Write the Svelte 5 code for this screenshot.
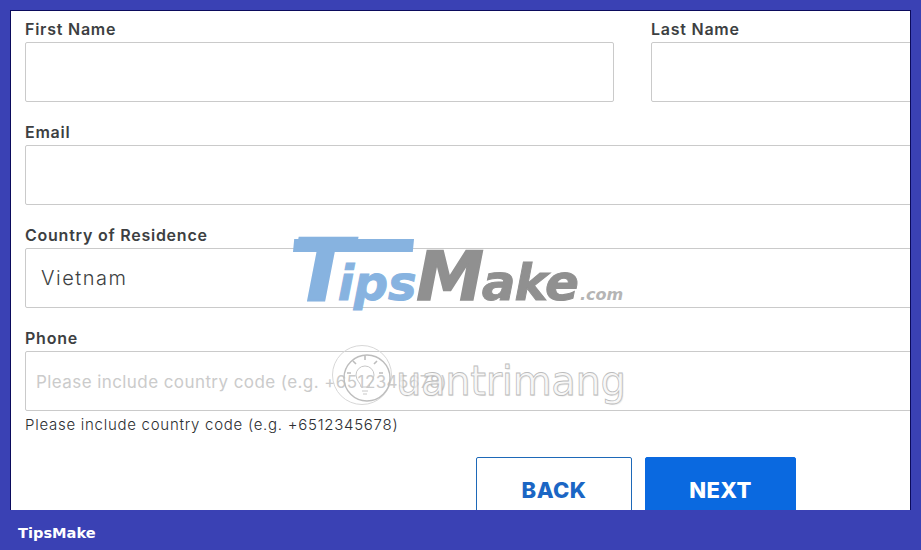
<script lang="ts">
    const fields = { first: '', last: '', email: '', country: 'Vietnam', phone: '' };
    const hint = 'Please include country code (e.g. +6512345678)';
</script>

<div class="page">
    <main class="panel">
        <form class="form">
            <div class="row">
                <label class="field">
                    <span class="label">First Name</span>
                    <input type="text" value={fields.first} />
                </label>
                <label class="field">
                    <span class="label">Last Name</span>
                    <input type="text" value={fields.last} />
                </label>
            </div>
            <label class="field">
                <span class="label">Email</span>
                <input type="email" value={fields.email} />
            </label>
            <label class="field">
                <span class="label">Country of Residence</span>
                <input class="country" type="text" value={fields.country} />
            </label>
            <label class="field phone">
                <span class="label">Phone</span>
                <input type="tel" placeholder={hint} value={fields.phone} />
                <span class="hint">{hint}</span>
            </label>
            <div class="actions">
                <button type="button" class="btn back">BACK</button>
                <button type="button" class="btn next">NEXT</button>
            </div>
        </form>
    </main>
    <footer class="footer">TipsMake</footer>

    <div class="logo" aria-hidden="true">
        <span class="bar"></span>
        <span class="t">T</span><span class="ips">ips</span><span class="m">M</span><span class="ake">ake</span><span class="com">.com</span>
    </div>

    <div class="qtm" aria-hidden="true">
        <svg width="64" height="66" viewBox="0 0 64 66" fill="none" stroke="#d8d8d8">
            <circle cx="30" cy="33" r="29.5" />
            <circle cx="35" cy="36" r="23" stroke="#bdbdbd" stroke-width="1.4" />
            <path d="M29 45c0-4-5-6-5-12a9 9 0 0 1 18 0c0 6-5 8-5 12z" stroke="#c8c8c8" />
            <path d="M30 49h6M31 52h4" stroke="#c8c8c8" />
            <path d="M33 14v4M21 19l3 3M45 19l-3 3M15 31h4M47 31h4" stroke="#bdbdbd" stroke-width="1.6" />
        </svg>
        <span class="qtm-text">uantrimang</span>
    </div>
</div>

<style>
    :global(body) {
        margin: 0;
        font-family: Inter, "Liberation Sans", sans-serif;
    }

    .page {
        position: relative;
        width: 921px;
        height: 550px;
        box-sizing: border-box;
        padding: 10px 10px 0;
        display: flex;
        flex-direction: column;
        background: #3a41b4;
        overflow: hidden;
    }

    .panel {
        flex: 1;
        min-height: 0;
        background: #fff;
        border: 1px solid #0b0b5c;
        border-bottom: 0;
        overflow: hidden;
    }

    .form {
        width: 1000px;
        padding: 9px 0 0 14px;
        display: flex;
        flex-direction: column;
        gap: 21px;
    }

    .row {
        display: grid;
        grid-template-columns: 589px 1fr;
        gap: 37px;
    }

    .field {
        display: flex;
        flex-direction: column;
        gap: 3px;
    }

    .label {
        font-size: 16px;
        line-height: 19px;
        font-weight: 600;
        letter-spacing: 0.76px;
        color: #3d3f42;
    }

    input {
        box-sizing: border-box;
        width: 100%;
        height: 60px;
        margin: 0;
        padding: 2px 10px 0;
        border: 1px solid #cacaca;
        border-radius: 2px;
        background: transparent;
        font: inherit;
        font-size: 17px;
        letter-spacing: 0.42px;
        color: #3d3f42;
        outline: none;
    }

    input::placeholder {
        color: #cbcbcb;
        opacity: 1;
    }

    .country {
        padding: 0 15px;
        font-size: 20px;
        font-weight: 300;
        letter-spacing: 1.5px;
    }

    .hint {
        margin-top: 1px;
        font-size: 15px;
        font-weight: 300;
        line-height: 20px;
        letter-spacing: 0.73px;
        color: #2c2e31;
    }

    .actions {
        display: flex;
        gap: 13px;
        margin-top: 1px;
        padding-left: 451px;
    }

    .btn {
        height: 66px;
        box-sizing: border-box;
        border-radius: 2px;
        font: inherit;
        font-size: 22px;
        font-weight: 800;
        letter-spacing: 0.4px;
    }

    .back {
        width: 156px;
        background: #fff;
        border: 1px solid #1e69b8;
        color: #1b66c4;
    }

    .next {
        width: 151px;
        background: #0a69e0;
        border: 1px solid #0a69e0;
        color: #fff;
    }

    .footer {
        flex: 0 0 40px;
        margin: 0 -10px;
        padding: 4px 0 0 18px;
        box-sizing: border-box;
        display: flex;
        align-items: center;
        background: #3a41b4;
        color: #fff;
        font-family: "DejaVu Sans", sans-serif;
        font-size: 14.6px;
        font-weight: 700;
    }

    /* watermarks over the form */
    .logo {
        position: absolute;
        left: 293px;
        top: 225px;
        display: flex;
        align-items: baseline;
        height: 90px;
        font-family: "DejaVu Sans", sans-serif;
        font-style: italic;
        font-weight: 700;
        line-height: 90px;
        white-space: nowrap;
        pointer-events: none;
    }

    .bar {
        position: absolute;
        left: 0;
        top: 14px;
        width: 121px;
        height: 13px;
        background: #87b3e0;
        clip-path: polygon(1% 0, 100% 0, 99% 100%, 0 100%);
    }

    .t {
        font-size: 86px;
        color: #87b3e0;
        margin-right: -14px;
        -webkit-text-stroke: 2px #87b3e0;
    }

    .ips {
        font-size: 48px;
        color: #87b3e0;
        letter-spacing: -0.3px;
        -webkit-text-stroke: 1px #87b3e0;
    }

    .m {
        font-size: 68px;
        color: #909090;
        letter-spacing: -2px;
        -webkit-text-stroke: 1.5px #909090;
    }

    .ake {
        font-size: 50px;
        color: #909090;
        letter-spacing: -1px;
        -webkit-text-stroke: 1px #909090;
    }

    .com {
        font-size: 16px;
        color: #b5b5b5;
        margin-left: 2px;
    }

    .qtm {
        position: absolute;
        left: 332px;
        top: 342px;
        display: flex;
        align-items: flex-start;
        pointer-events: none;
    }

    .qtm-text {
        margin-top: 16px;
        font-family: "DejaVu Sans", sans-serif;
        font-size: 40px;
        letter-spacing: -0.3px;
        line-height: 46px;
        color: rgba(255, 255, 255, 0.7);
        -webkit-text-stroke: 0.8px #bcbcbc;
        text-shadow: 1px 1px 1px rgba(0, 0, 0, 0.1);
    }
</style>
